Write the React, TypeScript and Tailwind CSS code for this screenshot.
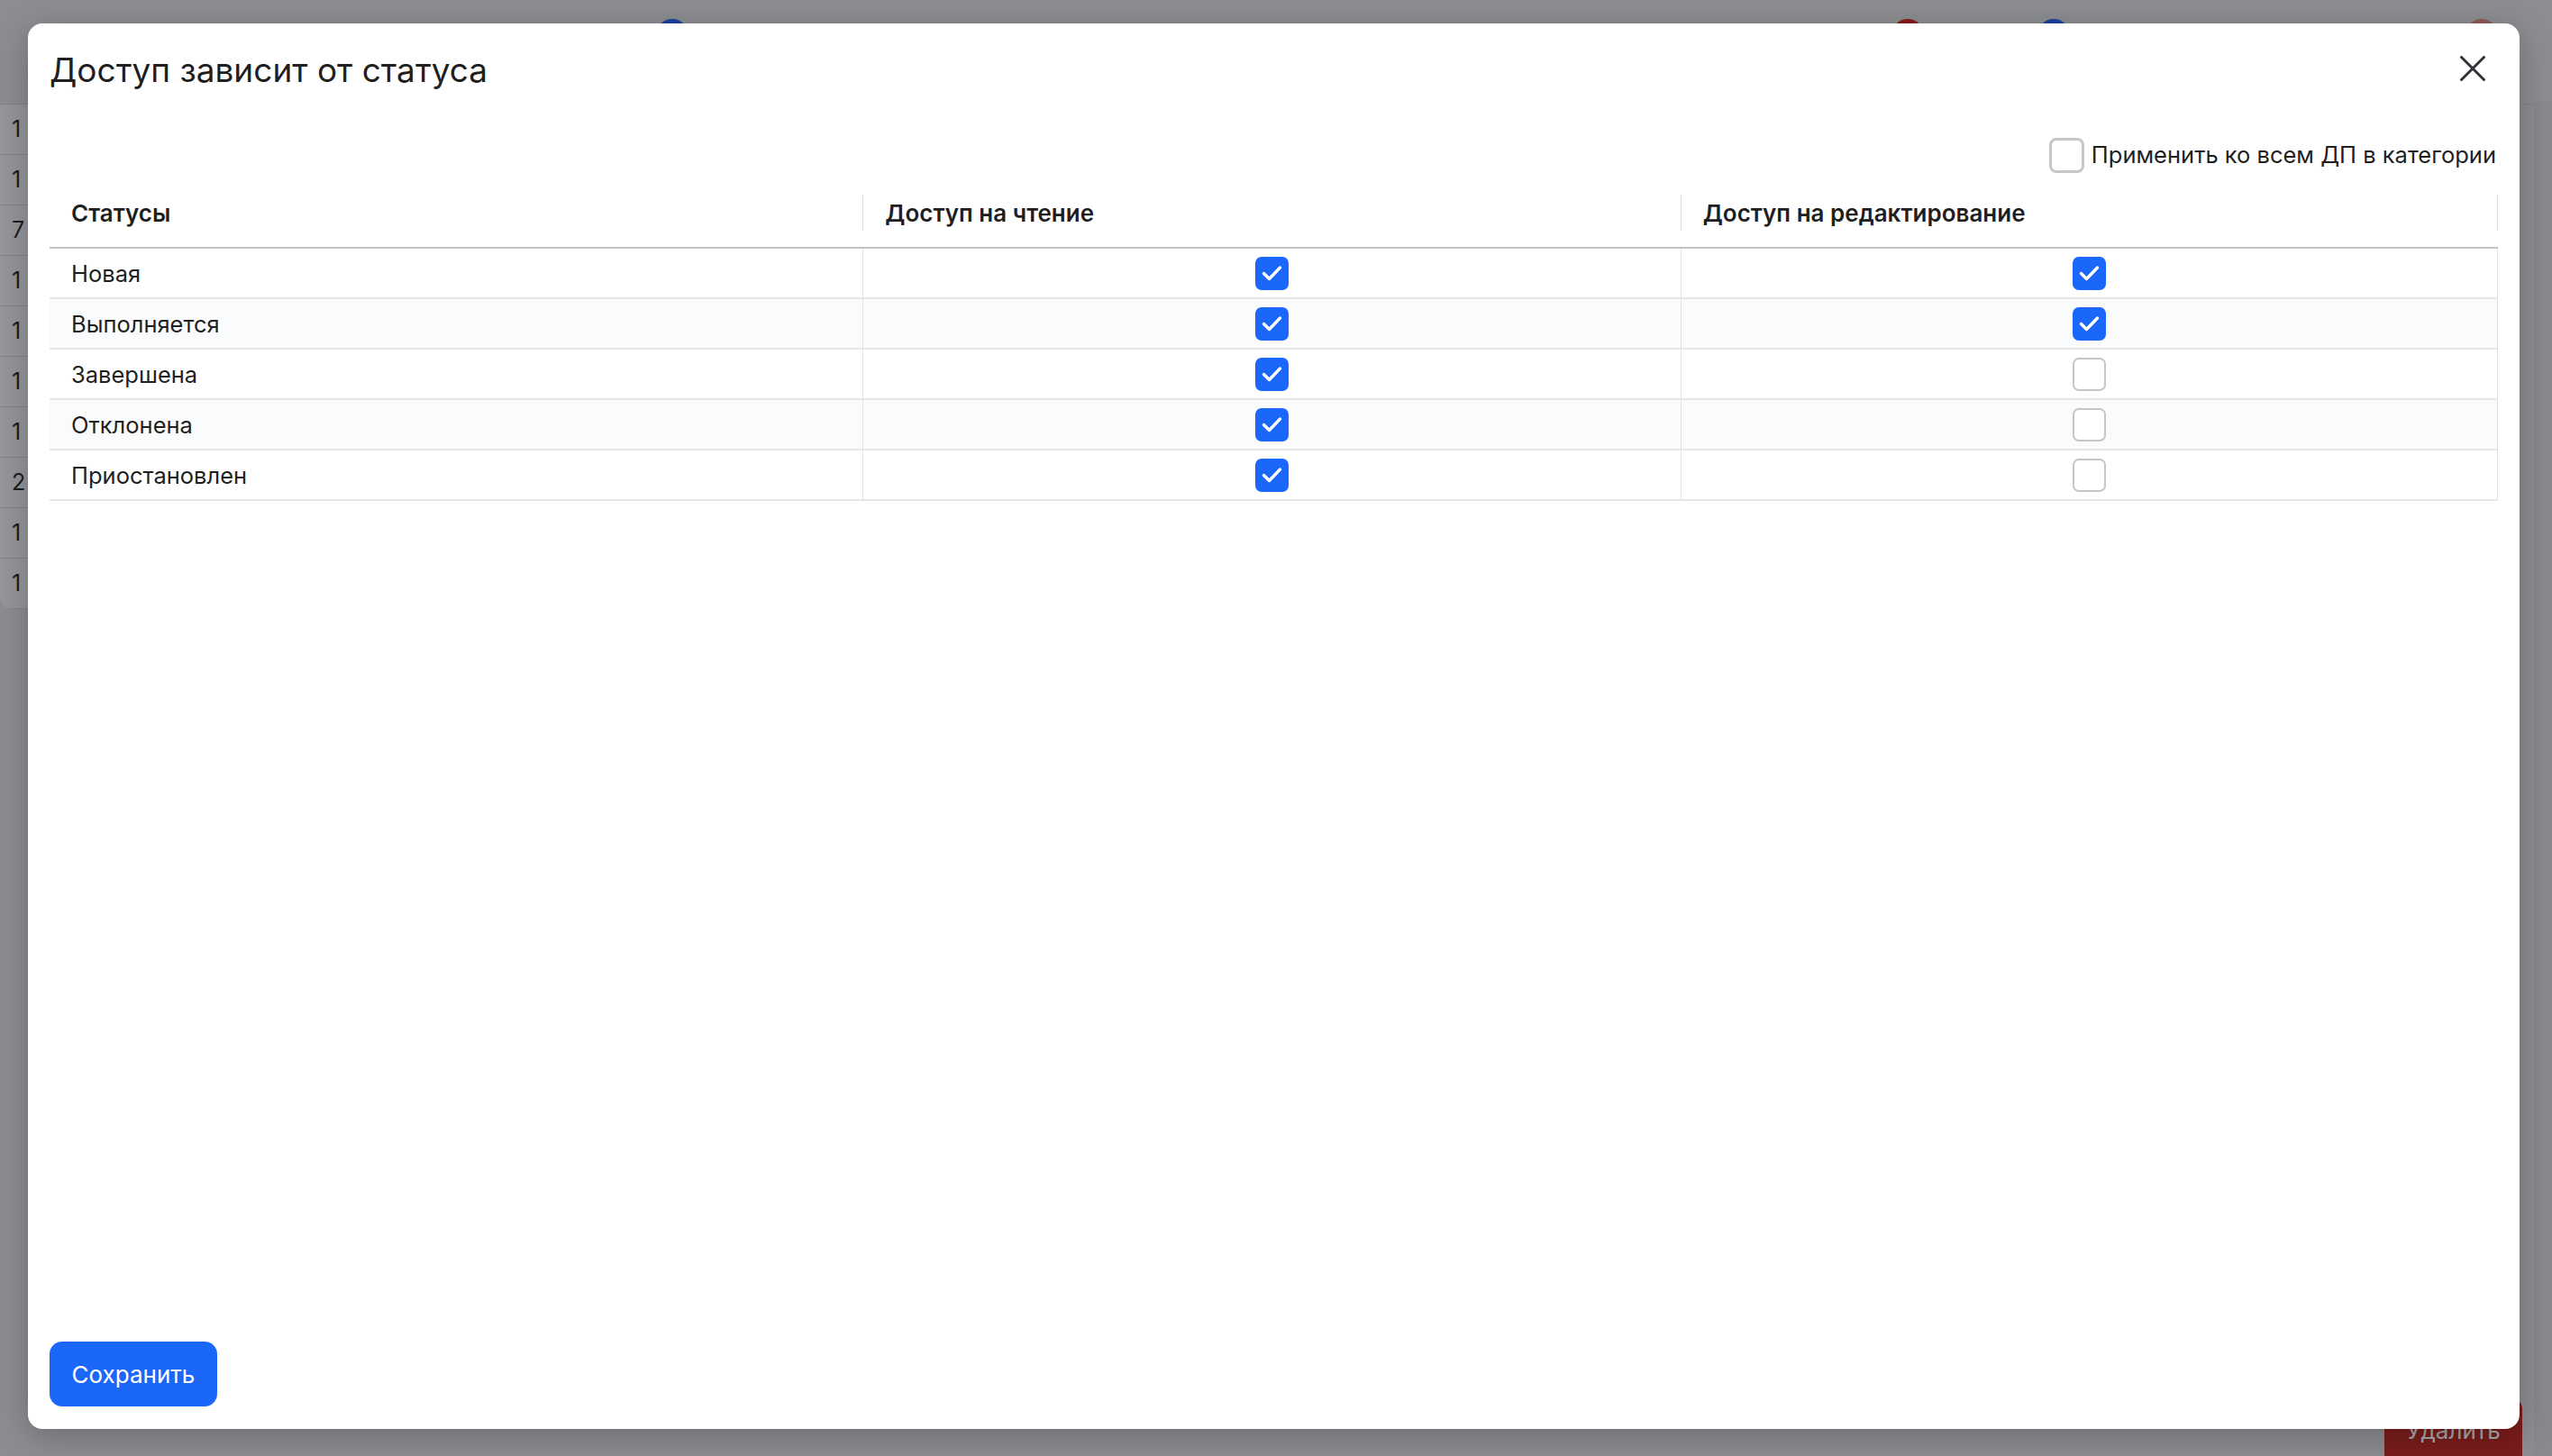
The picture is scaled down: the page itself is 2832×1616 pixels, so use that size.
import React from "react";

const rows: { name: string; read: boolean; edit: boolean }[] = [
  { name: "Новая", read: true, edit: true },
  { name: "Выполняется", read: true, edit: true },
  { name: "Завершена", read: true, edit: false },
  { name: "Отклонена", read: true, edit: false },
  { name: "Приостановлен", read: true, edit: false },
];

const bgNumbers = ["1", "1", "7", "1", "1", "1", "1", "2", "1", "1"];

function Check({ checked }: { checked: boolean }) {
  if (checked) {
    return (
      <span className="flex h-[37px] w-[37px] items-center justify-center rounded-[7px] bg-[#1b67fa]">
        <svg width="37" height="37" viewBox="0 0 37 37" fill="none">
          <path
            d="M9.5 18.5 L15.5 24.5 L27.5 12"
            stroke="white"
            strokeWidth="3.4"
            strokeLinecap="round"
            strokeLinejoin="round"
          />
        </svg>
      </span>
    );
  }
  return <span className="block h-[37px] w-[37px] rounded-[7px] border-2 border-[#c6c6c6] bg-white" />;
}

export default function App() {
  return (
    <div className="relative h-[1616px] w-full overflow-hidden bg-[#8d8e91] font-[Inter,'Noto_Sans',sans-serif]">
      {/* background page (dimmed) */}
      <div className="flex h-[116px] items-start border-b border-[#838487]">
        <div className="w-[728px]" />
        <div className="mt-[21px] h-[36px] w-[36px] rounded-full bg-[#1d43a0]" />
        <div className="w-[1335px]" />
        <div className="mt-[21px] h-[36px] w-[36px] rounded-full bg-[#8a1b1b]" />
        <div className="w-[126px]" />
        <div className="mt-[21px] h-[36px] w-[36px] rounded-full bg-[#1d43a0]" />
        <div className="w-[439px]" />
        <div className="mt-[21px] h-[36px] w-[36px] rounded-full bg-[#8f5a5a]" />
      </div>
      <div className="flex">
        <div className="w-[300px] overflow-hidden rounded-bl-[14px] bg-[#96979a]">
          {bgNumbers.map((n, i) => (
            <div
              key={i}
              className="flex h-[56px] items-center border-b border-[#838487] pl-[13px] text-[25px] text-[#1e1e1e]"
            >
              {n}
            </div>
          ))}
        </div>
      </div>
      <div className="absolute right-0 top-[113px] h-[1503px] w-[19px] border-l border-[#858689] bg-[#898a8d]" />
      <div className="absolute left-[2646px] top-[1552px] flex h-[90px] w-[153px] justify-center rounded-[12px] bg-[#7a1c1c] pt-[16px] text-[26px] text-[#a9a9a9]">
        Удалить
      </div>

      {/* modal */}
      <div className="absolute left-[31px] top-[26px] flex h-[1560px] w-[2765px] flex-col rounded-[16px] bg-white px-6 pb-[25px] pt-6 shadow-[0_8px_40px_rgba(0,0,0,0.25)]">
        <div className="flex h-[52px] items-center justify-between">
          <h1 className="mt-[3px] text-[37px] font-normal leading-none text-[#1f1f1f]">Доступ зависит от статуса</h1>
          <svg className="mr-[14px]" width="28" height="28" viewBox="0 0 28 28" fill="none">
            <path d="M1.5 1.5 L26.5 26.5 M26.5 1.5 L1.5 26.5" stroke="#2f3337" strokeWidth="3" strokeLinecap="round" />
          </svg>
        </div>

        <div className="mt-[51px] flex h-[38px] items-center justify-end pr-[2px]">
          <span className="block h-[39px] w-[39px] rounded-[8px] border-[3px] border-[#c6c6c6] bg-white" />
          <span className="ml-[8px] text-[25.5px] text-[#1f1f1f]">Применить ко всем ДП в категории</span>
        </div>

        <div className="mt-[5px] w-full">
          <div className="grid h-[80px] grid-cols-[902fr_907fr_907fr] border-b-2 border-[#c2c2c2]">
            {["Статусы", "Доступ на чтение", "Доступ на редактирование"].map((h, i) => (
              <div key={h} className="flex items-center pt-[2px]">
                {i > 0 && <div className="h-[40px] w-px bg-[#dedede]" />}
                <span className="pl-6 text-[26px] font-semibold text-[#1f1f1f]">{h}</span>
                {i === 2 && <div className="ml-auto h-[40px] w-px bg-[#dedede]" />}
              </div>
            ))}
          </div>
          {rows.map((r, i) => (
            <div
              key={r.name}
              className={`grid h-[56px] grid-cols-[902fr_907fr_907fr] border-b-2 border-[#e6e6e6] ${i % 2 === 1 ? "bg-[#fafbfd]" : "bg-white"}`}
            >
              <div className="flex items-center pl-6 pt-[3px] text-[25.5px] text-[#1f1f1f]">{r.name}</div>
              <div className="flex items-center justify-center border-l border-[#e3e3e3]">
                <Check checked={r.read} />
              </div>
              <div className="flex items-center justify-center border-l border-r border-[#e3e3e3]">
                <Check checked={r.edit} />
              </div>
            </div>
          ))}
        </div>

        <div className="flex-1" />

        <button className="flex h-[72px] w-[186px] items-center justify-center rounded-[14px] bg-[#1b67fa] text-[26px] text-white">
          Сохранить
        </button>
      </div>
    </div>
  );
}
